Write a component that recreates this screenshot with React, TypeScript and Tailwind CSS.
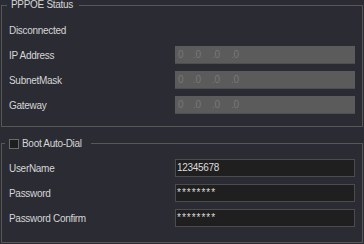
import React from "react";

const font = { fontFamily: '"Liberation Sans", Arial, sans-serif' };

function IpBox() {
  return (
    <div className="w-[180px] h-[18px] bg-[#5b5b5b] border-b border-[#4e4e4e] flex items-center text-[#777777] text-[10px] leading-none">
      <span className="ml-[3px] w-[15px]">0</span>
      <span className="w-[19px]">.0</span>
      <span className="w-[19px]">.0</span>
      <span>.0</span>
    </div>
  );
}

function TextBox({ value, pw }: { value: string; pw?: boolean }) {
  return (
    <div className="w-[180px] h-[18px] bg-[#1f1f1f] border border-[#4c4c4c] flex items-center text-[#dcdcdc] text-[10px] leading-none">
      <span className={pw ? "ml-[1px] tracking-[1px]" : "ml-[1px]"}>{value}</span>
    </div>
  );
}

function Row({ label, children }: { label: string; children?: React.ReactNode }) {
  return (
    <div className="flex items-center h-[18px]">
      <div className="w-[166px] text-[#d6d6d6]">{label}</div>
      {children}
    </div>
  );
}

export default function App() {
  return (
    <div
      className="w-[364px] h-[244px] bg-[#2a2b33] text-[10px] tracking-[-0.3px] overflow-hidden px-[1px] flex flex-col"
      style={font}
    >
      <fieldset className="border border-[#575757] pl-[7px] pr-[6px] pt-[11px] pb-[12px] flex flex-col gap-[7px]">
        <legend className="-ml-[2px] px-[4px] pr-[6px] leading-[10px] h-[10px] text-[#d6d6d6]">PPPOE Status</legend>
        <Row label="Disconnected" />
        <Row label="IP Address">
          <IpBox />
        </Row>
        <Row label="SubnetMask">
          <IpBox />
        </Row>
        <Row label="Gateway">
          <IpBox />
        </Row>
      </fieldset>
      <fieldset className="mt-[11px] border border-[#575757] pl-[7px] pr-[6px] pt-[10px] pb-[15px] flex flex-col gap-[7px]">
        <legend className="-ml-[4px] pl-[4px] pr-[9px] h-[11px] leading-[11px] text-[#d6d6d6]">
          <span className="flex items-center gap-[3px]">
            <span className="w-[10px] h-[10px] bg-[#1e1e1e] border border-[#6a6a6a]" />
            <span>Boot Auto-Dial</span>
          </span>
        </legend>
        <Row label="UserName">
          <TextBox value="12345678" />
        </Row>
        <Row label="Password">
          <TextBox value="********" pw />
        </Row>
        <Row label="Password Confirm">
          <TextBox value="********" pw />
        </Row>
      </fieldset>
    </div>
  );
}
